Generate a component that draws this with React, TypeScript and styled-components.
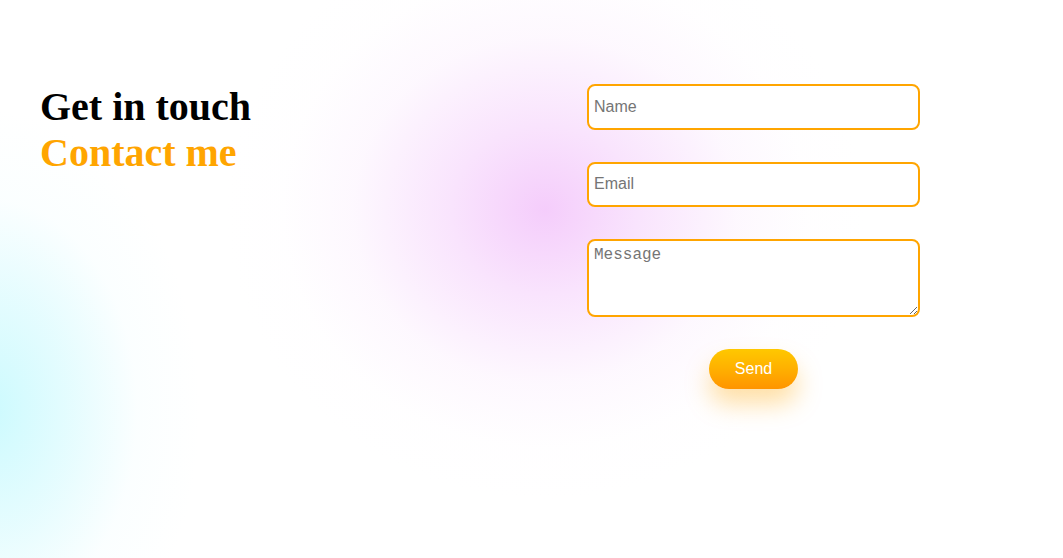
import React from "react";
import styled, { createGlobalStyle } from "styled-components";

const Global = createGlobalStyle`
  html, body { margin: 0; padding: 0; }
  body { background: #ffffff; }
  * { box-sizing: border-box; }
`;

const Page = styled.main`
  width: 1063px;
  height: 558px;
  overflow: hidden;
  display: flex;
  align-items: flex-start;
  padding: 82px 143px 0 40px;
  background:
    radial-gradient(ellipse 320px 290px at 545px 210px, rgba(244, 202, 251, 0.95) 0%, rgba(246, 214, 252, 0.65) 30%, rgba(250, 232, 253, 0.3) 60%, rgba(253, 246, 254, 0.1) 82%, rgba(255, 255, 255, 0) 100%),
    radial-gradient(ellipse 210px 300px at -10px 410px, rgba(204, 250, 254, 1) 0%, rgba(216, 251, 254, 0.65) 40%, rgba(238, 253, 255, 0.25) 70%, rgba(255, 255, 255, 0) 100%),
    #ffffff;
`;

const Intro = styled.section`
  flex: 1;
  padding-top: 2px;
`;

const Heading = styled.h1`
  margin: 0;
  font-family: "Liberation Serif", "Times New Roman", serif;
  font-weight: 700;
  font-size: 40px;
  line-height: 46px;
  color: #000000;
`;

const Accent = styled.span`
  display: block;
  color: #ffa500;
`;

const Form = styled.form`
  width: 333px;
  display: flex;
  flex-direction: column;
  gap: 32px;
  padding-top: 2px;
`;

const fieldBase = `
  width: 100%;
  border: 2px solid #ffa500;
  border-radius: 8px;
  background: #ffffff;
  outline: none;
  color: #222;
`;

const TextInput = styled.input`
  ${fieldBase}
  height: 45.5px;
  padding: 0 5px;
  font-family: "Liberation Sans", Arial, sans-serif;
  font-size: 16px;
  &::placeholder { color: #757575; }
`;

const TextArea = styled.textarea`
  ${fieldBase}
  height: 78px;
  padding: 5px 5px;
  font-family: "Liberation Mono", "Courier New", monospace;
  font-size: 16px;
  resize: both;
  &::placeholder { color: #757575; }
`;

const SendButton = styled.button`
  align-self: center;
  width: 89px;
  height: 40px;
  border: none;
  border-radius: 20px;
  background: linear-gradient(180deg, #ffc800 0%, #ffb000 50%, #ff9400 100%);
  color: #ffffff;
  font-family: "Liberation Sans", Arial, sans-serif;
  font-size: 16px;
  cursor: pointer;
  box-shadow: 0 15px 24px rgba(255, 165, 0, 0.35);
`;

export default function App() {
  return (
    <>
      <Global />
      <Page>
        <Intro>
          <Heading>
            Get in touch
            <Accent>Contact me</Accent>
          </Heading>
        </Intro>
        <Form onSubmit={(e) => e.preventDefault()}>
          <TextInput type="text" placeholder="Name" />
          <TextInput type="email" placeholder="Email" />
          <TextArea placeholder="Message" />
          <SendButton type="submit">Send</SendButton>
        </Form>
      </Page>
    </>
  );
}
